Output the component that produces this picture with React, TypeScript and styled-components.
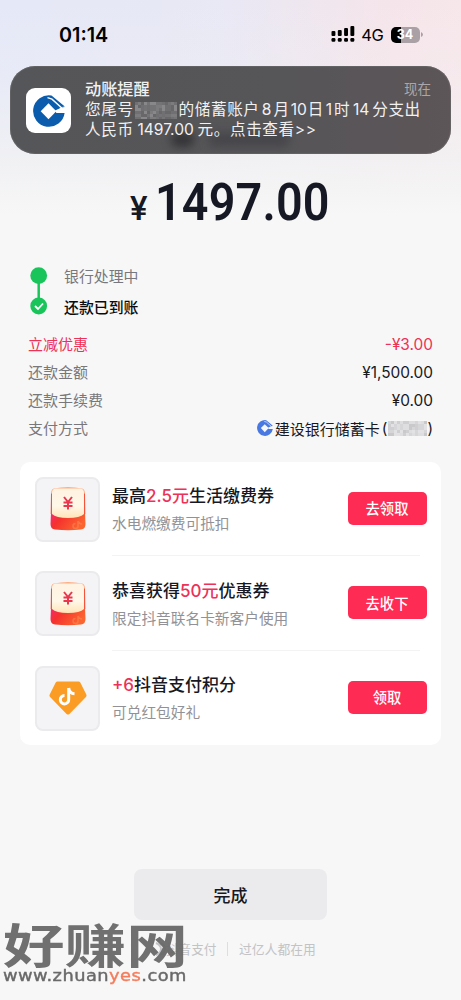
import React from 'react';
import styled, { createGlobalStyle } from 'styled-components';

const Global = createGlobalStyle`
  * { box-sizing: border-box; }
  body { margin: 0; background: #f7f7f7; }
`;

const Screen = styled.div`
  position: relative;
  display: flex;
  flex-direction: column;
  width: 461px;
  height: 1000px;
  overflow: hidden;
  font-family: Inter, 'Noto Sans CJK SC', sans-serif;
  color: #161823;
  white-space: nowrap;
  background:
    linear-gradient(180deg, rgba(247, 247, 247, 0) 0, rgba(245, 245, 246, 0.2) 80px, rgba(242, 242, 243, 0.85) 160px, #f7f7f7 215px),
    linear-gradient(90deg, #e5e8f7 0, #e9e8f4 50%, #f5e5ea 85%, #f6e7ea 100%);
`;

const StatusBar = styled.header`
  display: flex;
  align-items: center;
  height: 66px;
  padding: 3px 38px 0 59px;
  color: #000;
`;

const Clock = styled.span`
  flex: 1;
  font-size: 19.8px;
  font-weight: 600;
`;

const Network = styled.span`
  margin: 0 7px 0 6px;
  font-size: 16.5px;
  font-weight: 400;
  letter-spacing: -0.3px;
`;

const Battery = styled.span`
  display: flex;
  align-items: center;
  justify-content: center;
  width: 29px;
  height: 16px;
  margin-right: 1.5px;
  border-radius: 5px;
  background: linear-gradient(90deg, #000 0 10px, #aaa1a7 10px);
  color: #fff;
  font-size: 12.5px;
  font-weight: 700;
`;

const Notification = styled.section`
  position: relative;
  display: flex;
  width: 441px;
  height: 88px;
  margin-left: 10px;
  padding: 22px 20px 0 16px;
  border-radius: 25px;
  overflow: hidden;
  background: linear-gradient(90deg, #555659, #565558 60%, #5d5558);
  box-shadow: inset 0 0 1px 1px rgba(110, 110, 112, 0.6);
  color: #f1f1f2;
`;

const Shade = styled.span<{ $x: number; $w: number; $c: string }>`
  position: absolute;
  left: ${(p) => p.$x}px;
  top: 66px;
  width: ${(p) => p.$w}px;
  height: 15px;
  border-radius: 7px;
  background: ${(p) => p.$c};
  filter: blur(4px);
`;

const BankTile = styled.div`
  display: flex;
  align-items: center;
  justify-content: center;
  width: 45px;
  height: 45px;
  border-radius: 9px;
  background: #fff;
`;

const Message = styled.div`
  position: relative;
  flex: 1;
  margin: -9px 0 0 14px;
  font-size: 15.6px;
  line-height: 20px;
`;

const MessageHead = styled.div`
  display: flex;
  justify-content: space-between;
  font-size: 16.2px;
  font-weight: 500;
`;

const When = styled.span`
  font-size: 13.5px;
  font-weight: 400;
  color: #a9a7a9;
`;

const Line = styled.div`
  display: flex;
  align-items: center;
  height: 20px;
  padding-top: 2px;
  letter-spacing: 0.6px;
`;

const Digits = styled.span<{ $w: number }>`
  width: ${(p) => p.$w}px;
  text-align: center;
  letter-spacing: 0;
`;

const Amount = styled.div`
  display: flex;
  align-items: baseline;
  height: 96px;
  padding: 1px 0 0 130px;
  font-family: Roboto, sans-serif;
  line-height: 94px;
`;

const Yen = styled.span`
  width: 25px;
  font-size: 33px;
  font-weight: 500;
`;

const Figure = styled.span`
  font-size: 52.5px;
  font-weight: 600;
  letter-spacing: 0.2px;
  transform: scaleX(0.89);
  transform-origin: left;
`;

const Progress = styled.div`
  display: flex;
  gap: 16px;
  height: 76px;
  padding: 11px 0 0 30px;
`;

const Steps = styled.div`
  margin-top: 5px;
  font-size: 14.9px;
  line-height: 30.5px;
`;

const Step = styled.div<{ $done?: boolean }>`
  margin-top: ${(p) => (p.$done ? 0 : -4)}px;
  font-weight: ${(p) => (p.$done ? 500 : 400)};
  color: ${(p) => (p.$done ? '#0b0b0d' : '#77777c')};
`;

const Details = styled.dl`
  margin: 4px 28px 0;
`;

const DetailRow = styled.div<{ $red?: boolean }>`
  display: flex;
  align-items: center;
  justify-content: space-between;
  height: 27.9px;
  font-size: 15px;
  color: ${(p) => (p.$red ? '#ed3158' : '#77777c')};
`;

const Value = styled.dd<{ $red?: boolean }>`
  display: flex;
  align-items: center;
  margin: 0;
  padding-top: 1px;
  font-size: 15.4px;
  color: ${(p) => (p.$red ? '#ed3158' : '#18191f')};
`;

const CardName = styled.span`
  margin: 0 2px;
  font-size: 15px;
`;

const Card = styled.section`
  width: 421px;
  height: 283px;
  margin: 20px 0 0 20px;
  padding: 0 14px 0 15px;
  border-radius: 10px;
  background: #fff;
`;

const Offer = styled.article`
  display: flex;
  height: 94.6px;
  padding-top: 15px;
`;

const Thumb = styled.div`
  display: flex;
  flex: none;
  align-items: center;
  justify-content: center;
  width: 65px;
  height: 65px;
  border: 2px solid #ebebed;
  border-radius: 8px;
  background: #f4f4f6;
`;

const OfferText = styled.div<{ $last?: boolean }>`
  flex: none;
  width: 308px;
  height: 79.6px;
  margin: 0 -72px 0 12px;
  padding-top: 6.4px;
  border-bottom: ${(p) => (p.$last ? 0 : 1)}px solid #f3f3f4;
`;

const OfferTitle = styled.h3`
  margin: 0;
  font-size: 17px;
  font-weight: 500;
  line-height: 27px;
  em { font-style: normal; color: #ed3158; }
`;

const OfferNote = styled.p`
  margin: 0;
  font-size: 14.7px;
  line-height: 28px;
  color: #929296;
`;

const ClaimButton = styled.button`
  flex: none;
  width: 79px;
  height: 33px;
  margin: 15px 0 0 0;
  padding: 0 1px 1px 0;
  border: 0;
  border-radius: 5px;
  background: #fe2c55;
  color: #fff;
  font: 500 14.3px Inter, 'Noto Sans CJK SC', sans-serif;
`;

const DoneButton = styled.button`
  width: 193px;
  height: 51px;
  margin: 124px 0 0 134px;
  padding: 0;
  border: 0;
  border-radius: 8px;
  background: #ebebed;
  color: #161823;
  font: 500 17px Inter, 'Noto Sans CJK SC', sans-serif;
`;

const Footer = styled.footer`
  display: flex;
  align-items: center;
  height: 20px;
  margin: 19px 0 0 152px;
  font-size: 12.8px;
  color: #c3c3c6;
`;

const Brand = styled.span`
  width: 61px;
  font-size: 12.6px;
`;

const Separator = styled.span`
  width: 1px;
  height: 14px;
  margin: 0 11px 0 0;
  background: #dedee0;
`;

const Watermark = styled.div`
  position: absolute;
  left: 3px;
  top: 918px;
  color: #696969;
`;

const MarkName = styled.div`
  font: 700 47px/50px 'Noto Sans CJK SC', sans-serif;
  transform: scaleX(1.31);
  transform-origin: left;
  opacity: 0.95;
`;

const MarkUrl = styled.div`
  width: 165px;
  font: 400 15.5px/16px 'DejaVu Sans', sans-serif;
  letter-spacing: 0.4px;
  transform: scaleX(1.15);
  transform-origin: left;
  -webkit-text-stroke: 0.4px currentColor;
  span { color: #f47c5c; }
`;

const BankLogo = ({ size, color, bg }: { size: number; color: string; bg: string }) => (
  <svg width={size} height={size} viewBox="0 0 32 32">
    <path fill={color} d="M18.500 0.400A15.800 15.800 0 1 0 31.600 18H24L16 11L26 12.600L31.800 11.500Z" />
    <path fill={color} d="M8 8H19L27.500 13L22 19H8Z" />
    <path fill={bg} d="M15.500 8.300L23.300 16.200L15.500 24.300L7.700 16.200Z" />
    <path fill={bg} d="M22 15.600L27.500 12.900H32V18H23.500Z" />
    <path fill={color} d="M21 13.800L27 12.300H31.900Z" />
    <path fill="none" stroke={bg} strokeWidth="1.400" d="M14.500 2.700L19 4.200L28.800 13" />
  </svg>
);

const Mosaic = ({ w, h, base, cells }: { w: number; h: number; base: string; cells: string[] }) => {
  const cols = Math.ceil(w / 3);
  const rows = Math.ceil(h / 3);
  return (
    <svg width={w} height={h}>
      <rect width={w} height={h} fill={base} />
      {Array.from({ length: cols * rows }, (_, i) => {
        const c = i % cols;
        const r = Math.floor(i / cols);
        return <rect key={i} x={c * 3} y={r * 3} width={3} height={3} fill={cells[(c * c * 7 + r * r * 3 + ((c * 5 + r) % 7)) % cells.length]} />;
      })}
    </svg>
  );
};

const Censor = styled.span<{ $w: number }>`
  display: flex;
  flex: none;
  align-items: center;
  justify-content: center;
  width: ${(p) => p.$w}px;
`;

const Signal = () => (
  <svg width="24" height="17" viewBox="0 0 24 17" fill="#000">
    {[0, 6.3, 12.6, 18.9].map((x, i) => (
      <g key={x}>
        <rect x={x + 0.5} y={[5, 4, 2, 0][i]} width="3.900" height={[5, 6, 8, 10][i]} rx="1.100" />
        <rect x={x + 0.5} y="12" width="3.900" height="3.800" rx="1.200" />
      </g>
    ))}
  </svg>
);

const Envelope = () => (
  <svg width="38" height="46" viewBox="0 0 38 46">
    <defs>
      <linearGradient id="red" x1="0" y1="0" x2="1" y2=".4">
        <stop offset="0" stopColor="#f52b72" />
        <stop offset=".35" stopColor="#f5322d" />
        <stop offset="1" stopColor="#fb6530" />
      </linearGradient>
      <linearGradient id="cream" x1="0" y1="0" x2="0" y2="1">
        <stop offset="0" stopColor="#fff3e2" />
        <stop offset=".6" stopColor="#fff7e8" />
        <stop offset="1" stopColor="#ffe5b7" />
      </linearGradient>
    </defs>
    <path fill="#ffad83" d="M5 2.500Q19-.5 33 2.500Q36 3 36 8V32H2V8Q2 3 5 2.500Z" />
    <path fill="url(#red)" d="M2 27L1.500 38Q1.500 43 6 43.500Q19 45 32 43.500Q36.500 43 36.500 38L36 27Z" />
    <path fill="#f4533c" d="M2 8L1.700 28H3.200V7ZM36 8L36.300 28H34.800V7Z" />
    <path fill="url(#cream)" d="M7 2.500H31Q35 2.500 35 7V28Q31 32 19 32Q7 32 3 28V7Q3 2.500 7 2.500Z" />
    <path fill="none" stroke="#e8374f" strokeWidth="2" d="M15 11L19 16L23 11M14.500 16.500H23.500M14.500 20H23.500M19 16V23.500" />
    <path fill="none" stroke="#ff8d58" strokeWidth="1.500" d="M29 35V40A2.500 2.500 0 1 1 26.500 37.500M29 35Q30 38 33 38" opacity=".5" />
  </svg>
);

const Gem = () => (
  <svg width="38" height="34" viewBox="0 0 38 34">
    <path fill="#fb9d25" stroke="#fb9d25" strokeWidth="4" strokeLinejoin="round" d="M8.500 2.500H29.500L35.500 14.500L19 31.500L2.500 14.500Z" />
    <path fill="none" stroke="#fff" strokeWidth="3" d="M19.700 7V18.500A4.200 4.200 0 1 1 15.500 14.500M19.700 7Q20.500 12.500 25.500 12.800" />
  </svg>
);

const offers = [
  { before: '最高', hot: '2.5元', after: '生活缴费券', note: '水电燃缴费可抵扣', action: '去领取', icon: <Envelope /> },
  { before: '恭喜获得', hot: '50元', after: '优惠券', note: '限定抖音联名卡新客户使用', action: '去收下', icon: <Envelope /> },
  { before: '', hot: '+6', after: '抖音支付积分', note: '可兑红包好礼', action: '领取', icon: <Gem /> },
];

export default function App() {
  return (
    <>
      <Global />
      <Screen>
        <StatusBar>
          <Clock>01:14</Clock>
          <Signal />
          <Network>4G</Network>
          <Battery>34</Battery>
          <svg width="2" height="5"><path fill="#aaa1a7" d="M0 0Q2 1 2 2.500T0 5Z" /></svg>
        </StatusBar>

        <Notification>
          <Shade $x={161} $w={23} $c="#353538" />
          <Shade $x={198} $w={82} $c="rgba(65,64,68,.7)" />
          <BankTile><BankLogo size={32} color="#0b5cad" bg="#fff" /></BankTile>
          <Message>
            <MessageHead>动账提醒<When>现在</When></MessageHead>
            <Line>
              您尾号
              <Censor $w={45}>
                <Mosaic w={42} h={17} base="#77777a" cells={['#707073', '#68686b', '#7c7c7f', '#747477', '#88888a']} />
              </Censor>
              的储蓄账户<Digits $w={14}>8</Digits>月<Digits $w={18}>10</Digits>日<Digits $w={10}>1</Digits>时
              <Digits $w={22}>14</Digits>分支出
            </Line>
            <Line>
              人民币<Digits $w={64}>1497.00</Digits>元。点击查看&gt;&gt;
            </Line>
          </Message>
        </Notification>

        <Amount><Yen>¥</Yen><Figure>1497.00</Figure></Amount>

        <Progress>
          <svg width="18" height="56" viewBox="0 0 18 56">
            <path stroke="#19c55b" strokeWidth="2.500" d="M8.700 14V44" />
            <circle cx="8.700" cy="14.600" r="8.400" fill="#19c55b" />
            <circle cx="8.700" cy="45" r="8.400" fill="#19c55b" />
            <path fill="none" stroke="#fff" strokeWidth="1.800" d="M5 45L8 48L13 42.500" />
          </svg>
          <Steps><Step>银行处理中</Step><Step $done>还款已到账</Step></Steps>
        </Progress>

        <Details>
          <DetailRow $red><dt>立减优惠</dt><Value $red>-¥3.00</Value></DetailRow>
          <DetailRow><dt>还款金额</dt><Value>¥1,500.00</Value></DetailRow>
          <DetailRow><dt>还款手续费</dt><Value>¥0.00</Value></DetailRow>
          <DetailRow>
            <dt>支付方式</dt>
            <Value>
              <BankLogo size={16} color="#4a78e2" bg="#f7f7f7" />
              <CardName>建设银行储蓄卡</CardName>(
              <Censor $w={40}>
                <Mosaic w={39} h={15} base="#d6d6d8" cells={['#d6d6d8', '#e2e2e4', '#c9c9cc', '#dedee0', '#cfcfd2']} />
              </Censor>)
            </Value>
          </DetailRow>
        </Details>

        <Card>
          {offers.map((o, i) => (
            <Offer key={o.action}>
              <Thumb>{o.icon}</Thumb>
              <OfferText $last={i === 2}>
                <OfferTitle>{o.before}<em>{o.hot}</em>{o.after}</OfferTitle>
                <OfferNote>{o.note}</OfferNote>
              </OfferText>
              <ClaimButton>{o.action}</ClaimButton>
            </Offer>
          ))}
        </Card>

        <DoneButton>完成</DoneButton>
        <Footer>
          <svg width="14" height="14" viewBox="0 0 14 14" fill="none" stroke="#c3c3c6" strokeWidth="2">
            <path d="M4 1Q9 3 9 7T4 13M8 1Q13 3 13 7T8 13" />
          </svg>
          <Brand>抖音支付</Brand>
          <Separator />
          <span>过亿人都在用</span>
        </Footer>

        <Watermark>
          <MarkName>好赚网</MarkName>
          <MarkUrl>www.zhuan<span>yes</span>.com</MarkUrl>
        </Watermark>
      </Screen>
    </>
  );
}
